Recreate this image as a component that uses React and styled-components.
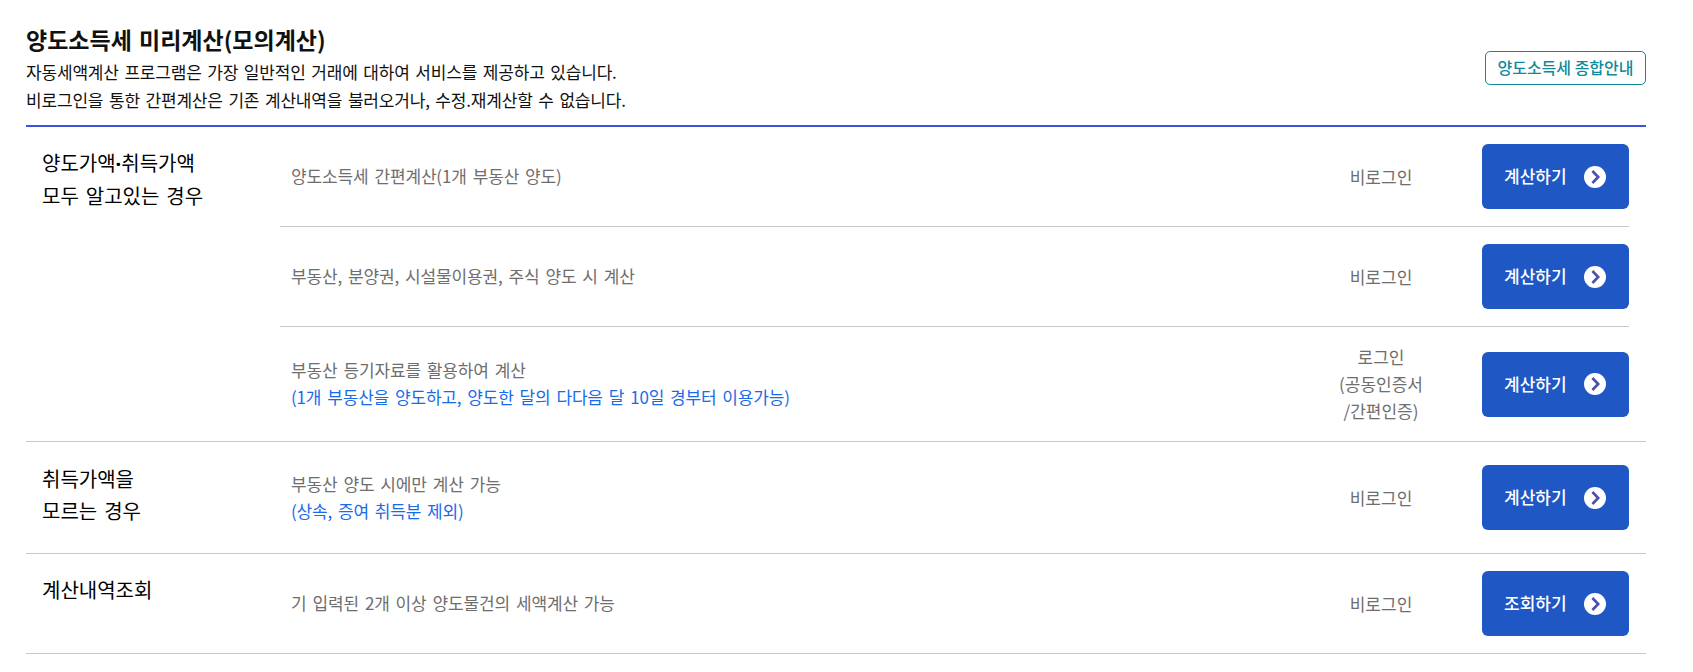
import React from "react";
import styled, { createGlobalStyle } from "styled-components";

const GlobalStyle = createGlobalStyle`
  body {
    margin: 0;
    background: #fff;
    font-family: "Noto Sans CJK KR", "Noto Sans", sans-serif;
  }
`;

const Page = styled.div`
  padding: 25px 47px 0 26px;
`;

const Header = styled.header`
  display: flex;
  justify-content: space-between;
  align-items: flex-start;
  padding-bottom: 11px;
  border-bottom: 2px solid #3f4fe0;
`;

const Title = styled.h2`
  margin: 0 0 5px;
  font-size: 23px;
  line-height: 28px;
  font-weight: 700;
  word-spacing: 2px;
  color: #111;
`;

const Desc = styled.p`
  margin: 0;
  font-size: 17px;
  line-height: 28px;
  letter-spacing: -0.18px;
  word-spacing: 2px;
  color: #111;
`;

const GuideLink = styled.a`
  display: block;
  box-sizing: border-box;
  width: 161px;
  height: 34px;
  margin-top: 26px;
  border: 1px solid #0e8a9c;
  border-radius: 5px;
  font-size: 16px;
  font-weight: 500;
  line-height: 31px;
  text-align: center;
  color: #0e8a9c;
`;

const Group = styled.section`
  display: grid;
  grid-template-columns: 254px 1fr;
  border-bottom: 1px solid #c8c8c8;
`;

const GroupTitle = styled.h3`
  margin: 0;
  padding: ${(p) => p.$top}px 0 0 16px;
  font-size: 20px;
  line-height: 32px;
  font-weight: 400;
  word-spacing: 2.5px;
  color: #000;
`;

const Dot = styled.span`
  font-family: "Noto Sans", sans-serif;
  font-weight: 700;
`;

const Row = styled.div`
  display: grid;
  grid-template-columns: 1fr 202px 147px;
  align-items: center;
  box-sizing: border-box;
  height: ${(p) => p.$height}px;
  margin-right: 17px;
  &:not(:last-child) {
    border-bottom: 1px solid #c8c8c8;
  }
`;

const RowText = styled.div`
  padding: 0 0 2px 11px;
  font-size: 17px;
  line-height: 27px;
  letter-spacing: -0.15px;
  word-spacing: 2.3px;
  color: #6e6e6e;
`;

const Note = styled.span`
  display: block;
  letter-spacing: -0.18px;
  color: #1a6be8;
`;

const Access = styled.div`
  padding-bottom: 1px;
  font-size: 17px;
  line-height: 27px;
  text-align: center;
  color: #6e6e6e;
`;

const CalcButton = styled.button`
  display: flex;
  align-items: center;
  justify-content: space-between;
  width: 147px;
  height: 65px;
  padding: 0 23px 0 22px;
  border: 0;
  border-radius: 6px;
  background: #1f57c5;
  font-family: inherit;
  font-size: 17px;
  font-weight: 500;
  color: #fff;
`;

const ButtonLabel = styled.span`
  margin-bottom: 2px;
`;

const Arrow = () => (
  <svg width="22" height="22" viewBox="0 0 22 22" aria-hidden="true">
    <circle cx="11" cy="11" r="11" fill="#fff" />
    <path d="M8.4 5 14.2 11l-5.8 6" fill="none" stroke="#4a4fb0" strokeWidth="2.6" />
  </svg>
);

const groups = [
  {
    id: "both",
    title: [
      <>
        양도가액<Dot>·</Dot>취득가액
      </>,
      "모두 알고있는 경우",
    ],
    top: 20,
    rows: [
      { height: 100, text: "양도소득세 간편계산(1개 부동산 양도)", access: ["비로그인"] },
      { height: 100, text: "부동산, 분양권, 시설물이용권, 주식 양도 시 계산", access: ["비로그인"] },
      {
        height: 114,
        text: "부동산 등기자료를 활용하여 계산",
        note: "(1개 부동산을 양도하고, 양도한 달의 다다음 달 10일 경부터 이용가능)",
        access: ["로그인", "(공동인증서", "/간편인증)"],
      },
    ],
  },
  {
    id: "unknown",
    title: ["취득가액을", "모르는 경우"],
    top: 21,
    rows: [
      {
        height: 111,
        text: "부동산 양도 시에만 계산 가능",
        note: "(상속, 증여 취득분 제외)",
        access: ["비로그인"],
      },
    ],
  },
  {
    id: "history",
    title: ["계산내역조회"],
    top: 20,
    rows: [
      {
        height: 99,
        text: "기 입력된 2개 이상 양도물건의 세액계산 가능",
        access: ["비로그인"],
        button: "조회하기",
      },
    ],
  },
];

const App = () => {
  return (
    <Page>
      <GlobalStyle />
      <Header>
        <div>
          <Title>양도소득세 미리계산(모의계산)</Title>
          <Desc>자동세액계산 프로그램은 가장 일반적인 거래에 대하여 서비스를 제공하고 있습니다.</Desc>
          <Desc>비로그인을 통한 간편계산은 기존 계산내역을 불러오거나, 수정.재계산할 수 없습니다.</Desc>
        </div>
        <GuideLink>양도소득세 종합안내</GuideLink>
      </Header>
      {groups.map((group) => (
        <Group key={group.id}>
          <GroupTitle $top={group.top}>
            {group.title.map((line, i) => (
              <div key={i}>{line}</div>
            ))}
          </GroupTitle>
          <div>
            {group.rows.map((row) => (
              <Row key={row.text} $height={row.height}>
                <RowText>
                  {row.text}
                  {row.note && <Note>{row.note}</Note>}
                </RowText>
                <Access>
                  {row.access.map((line) => (
                    <div key={line}>{line}</div>
                  ))}
                </Access>
                <CalcButton>
                  <ButtonLabel>{row.button || "계산하기"}</ButtonLabel>
                  <Arrow />
                </CalcButton>
              </Row>
            ))}
          </div>
        </Group>
      ))}
    </Page>
  );
};

export default App;
